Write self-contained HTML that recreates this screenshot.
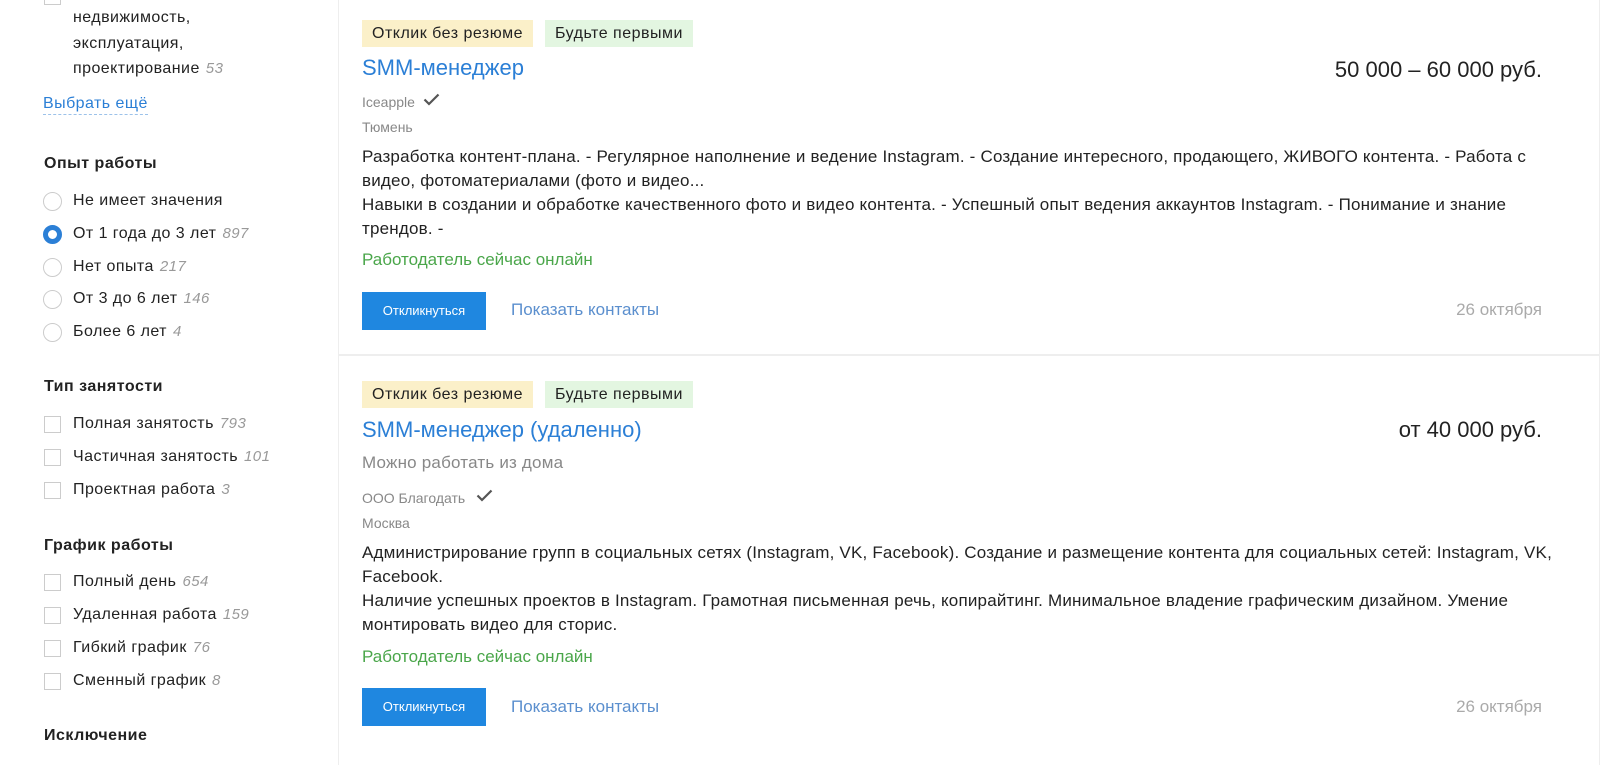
<!DOCTYPE html>
<html><head><meta charset="utf-8"><style>
body{margin:0;width:1600px;height:765px;overflow:hidden;background:#fff;font-family:"Liberation Sans",Arial,sans-serif;color:#222;position:relative}
.a{position:absolute;white-space:nowrap;line-height:24px;font-size:16px}
.l{letter-spacing:0.45px}
.n{color:#999;font-style:italic;margin-left:6px;font-size:15px}
.h{font-weight:bold;font-size:16px;color:#222;letter-spacing:0.5px}
.cb{position:absolute;left:44px;width:17px;height:17px;border:1px solid #ccc;box-sizing:border-box;background:#fff}
.rd{position:absolute;left:43px;width:19px;height:19px;border:1px solid #ccc;box-sizing:border-box;border-radius:50%}
.rd.on{border:5px solid #2b7fd6;background:#fff}
.tag{position:absolute;height:27px;line-height:27px;padding:0 10px;font-size:16px;white-space:nowrap;letter-spacing:0.5px}
.y{background:#fbf0c9}.g{background:#e3f6e1}
.ttl{color:#2b7fd6;font-size:22px}
.sal{font-size:22px;right:58px}
.sm{font-size:14px;color:#888}
.d{font-size:17px;letter-spacing:0.2px}
.on2{color:#4aa64a;font-size:17px}
.btn{position:absolute;left:362px;width:124px;height:38px;background:#1f87e0;color:#fff;font-size:13px;text-align:center;line-height:38px}
.lk{color:#5b8fce;font-size:17px}
.dt{color:#aaa;right:58px;font-size:17px}
.ck{position:absolute}
</style></head><body>
<div style="position:absolute;left:338px;top:0;width:1260px;height:765px;border-left:1px solid #eee;border-right:1px solid #eee"></div>
<div style="position:absolute;left:339px;top:354px;width:1261px;height:2px;background:#eee"></div>

<div class="cb" style="top:-12px"></div>
<div class="a l" style="left:73px;top:6px">недвижимость,</div>
<div class="a l" style="left:73px;top:32px">эксплуатация,</div>
<div class="a l" style="left:73px;top:57px">проектирование<span class="n">53</span></div>
<div class="a l" style="left:43px;top:93px;color:#2b7fd6;border-bottom:1px dashed #9cc2ea;line-height:21px">Выбрать ещё</div>
<div class="a h" style="left:44px;top:152px">Опыт работы</div>
<div class="rd" style="top:192px"></div><div class="a l" style="left:73px;top:189px">Не имеет значения</div>
<div class="rd on" style="top:225px"></div><div class="a l" style="left:73px;top:222px">От 1 года до 3 лет<span class="n">897</span></div>
<div class="rd" style="top:258px"></div><div class="a l" style="left:73px;top:255px">Нет опыта<span class="n">217</span></div>
<div class="rd" style="top:290px"></div><div class="a l" style="left:73px;top:287px">От 3 до 6 лет<span class="n">146</span></div>
<div class="rd" style="top:323px"></div><div class="a l" style="left:73px;top:320px">Более 6 лет<span class="n">4</span></div>
<div class="a h" style="left:44px;top:375px">Тип занятости</div>
<div class="cb" style="top:416px"></div><div class="a l" style="left:73px;top:412px">Полная занятость<span class="n">793</span></div>
<div class="cb" style="top:449px"></div><div class="a l" style="left:73px;top:445px">Частичная занятость<span class="n">101</span></div>
<div class="cb" style="top:482px"></div><div class="a l" style="left:73px;top:478px">Проектная работа<span class="n">3</span></div>
<div class="a h" style="left:44px;top:534px">График работы</div>
<div class="cb" style="top:574px"></div><div class="a l" style="left:73px;top:570px">Полный день<span class="n">654</span></div>
<div class="cb" style="top:607px"></div><div class="a l" style="left:73px;top:603px">Удаленная работа<span class="n">159</span></div>
<div class="cb" style="top:640px"></div><div class="a l" style="left:73px;top:636px">Гибкий график<span class="n">76</span></div>
<div class="cb" style="top:673px"></div><div class="a l" style="left:73px;top:669px">Сменный график<span class="n">8</span></div>
<div class="a h" style="left:44px;top:724px">Исключение</div>

<!-- card 1 -->
<div class="tag y" style="left:362px;top:20px">Отклик без резюме</div>
<div class="tag g" style="left:545px;top:20px">Будьте первыми</div>
<div class="a ttl" style="left:362px;top:56px">SMM-менеджер</div>
<div class="a sal" style="top:58px">50 000 – 60 000 руб.</div>
<div class="a sm" style="left:362px;top:90px">Iceapple</div>
<svg class="ck" style="left:423px;top:93px" width="17" height="13" viewBox="0 0 17 13"><path d="M1.5 6.5 L6 11 L15.5 1.5" fill="none" stroke="#555" stroke-width="2.2"/></svg>
<div class="a sm" style="left:362px;top:115px">Тюмень</div>
<div class="a d" style="left:362px;top:145px">Разработка контент-плана. - Регулярное наполнение и ведение Instagram. - Создание интересного, продающего, ЖИВОГО контента. - Работа с</div>
<div class="a d" style="left:362px;top:169px">видео, фотоматериалами (фото и видео...</div>
<div class="a d" style="left:362px;top:193px">Навыки в создании и обработке качественного фото и видео контента. - Успешный опыт ведения аккаунтов Instagram. - Понимание и знание</div>
<div class="a d" style="left:362px;top:217px">трендов. -</div>
<div class="a on2" style="left:362px;top:248px">Работодатель сейчас онлайн</div>
<div class="btn" style="top:292px">Откликнуться</div>
<div class="a lk" style="left:511px;top:298px">Показать контакты</div>
<div class="a dt" style="top:298px">26 октября</div>

<!-- card 2 -->
<div class="tag y" style="left:362px;top:381px">Отклик без резюме</div>
<div class="tag g" style="left:545px;top:381px">Будьте первыми</div>
<div class="a ttl" style="left:362px;top:418px">SMM-менеджер (удаленно)</div>
<div class="a sal" style="top:418px">от 40 000 руб.</div>
<div class="a d" style="left:362px;top:451px;color:#888">Можно работать из дома</div>
<div class="a sm" style="left:362px;top:486px">ООО Благодать</div>
<svg class="ck" style="left:476px;top:489px" width="17" height="13" viewBox="0 0 17 13"><path d="M1.5 6.5 L6 11 L15.5 1.5" fill="none" stroke="#555" stroke-width="2.2"/></svg>
<div class="a sm" style="left:362px;top:511px">Москва</div>
<div class="a d" style="left:362px;top:541px">Администрирование групп в социальных сетях (Instagram, VK, Facebook). Создание и размещение контента для социальных сетей: Instagram, VK,</div>
<div class="a d" style="left:362px;top:565px">Facebook.</div>
<div class="a d" style="left:362px;top:589px">Наличие успешных проектов в Instagram. Грамотная письменная речь, копирайтинг. Минимальное владение графическим дизайном. Умение</div>
<div class="a d" style="left:362px;top:613px">монтировать видео для сторис.</div>
<div class="a on2" style="left:362px;top:645px">Работодатель сейчас онлайн</div>
<div class="btn" style="top:688px">Откликнуться</div>
<div class="a lk" style="left:511px;top:695px">Показать контакты</div>
<div class="a dt" style="top:695px">26 октября</div>
</body></html>
